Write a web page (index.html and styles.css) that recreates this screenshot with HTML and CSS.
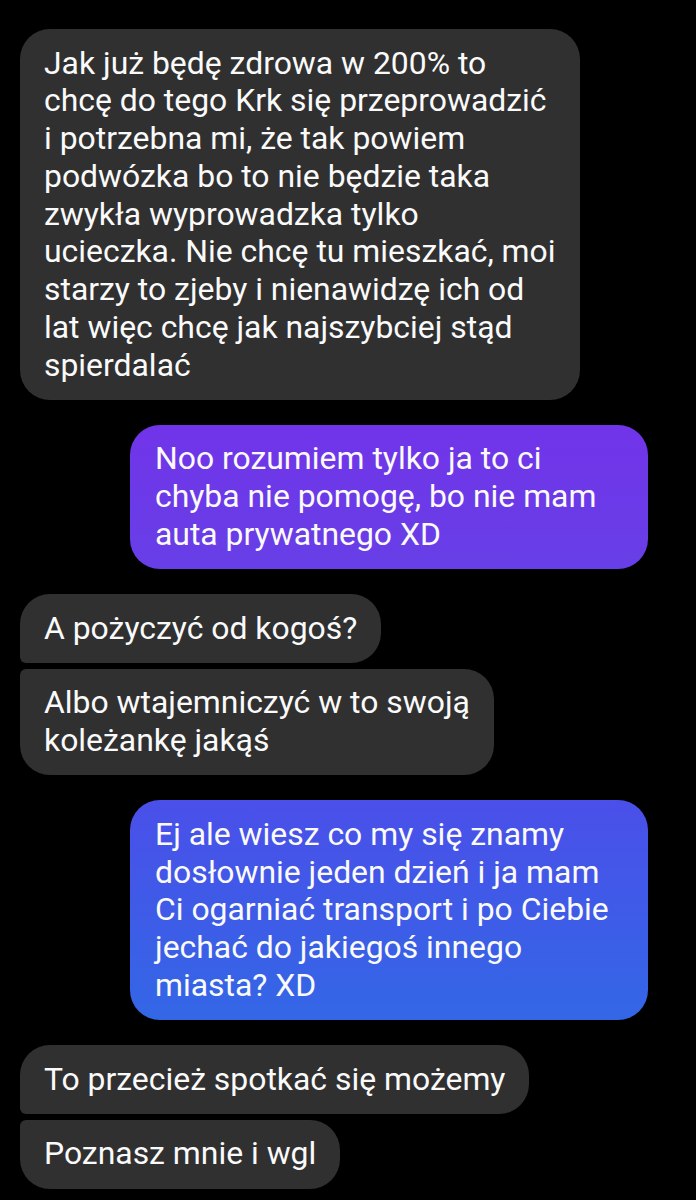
FILE: index.html
```html
<!DOCTYPE html>
<html lang="pl">
<head>
  <meta charset="UTF-8" />
  <meta name="viewport" content="width=device-width, initial-scale=1.0"/>
  <title>Czat</title>
  <link rel="stylesheet" href="styles.css">
</head>
<body>

  <div class="chat">

    <div class="group">
      <div class="msg in">Jak już będę zdrowa w 200% to<br>chcę do tego Krk się przeprowadzić<br>i potrzebna mi, że tak powiem<br>podwózka bo to nie będzie taka<br>zwykła wyprowadzka tylko<br>ucieczka. Nie chcę tu mieszkać, moi<br>starzy to zjeby i nienawidzę ich od<br>lat więc chcę jak najszybciej stąd<br>spierdalać</div>
    </div>

    <div class="group">
      <div class="msg out purple">Noo rozumiem tylko ja to ci<br>chyba nie pomogę, bo nie mam<br>auta prywatnego XD</div>
    </div>

    <div class="group">
      <div class="msg in">A pożyczyć od kogoś?</div>
      <div class="msg in">Albo wtajemniczyć w to swoją<br>koleżankę jakąś</div>
    </div>

    <div class="group">
      <div class="msg out blue">Ej ale wiesz co my się znamy<br>dosłownie jeden dzień i ja mam<br>Ci ogarniać transport i po Ciebie<br>jechać do jakiegoś innego<br>miasta? XD</div>
    </div>

    <div class="group">
      <div class="msg in">To przecież spotkać się możemy</div>
      <div class="msg in">Poznasz mnie i wgl</div>
    </div>

  </div>

</body>
</html>
```

FILE: styles.css
```css
:root {
  --bg-color: #000;
  --text-color: #fafafa;
  --bubble-in: #303030;
  --radius: 30px;
  --radius-small: 6px;
}

body {
  margin: 0;
  background-color: var(--bg-color);
  color: var(--text-color);
  font-family: Roboto, 'Noto Sans', sans-serif;
  font-size: 31.9px;
  line-height: 37.75px;
}

.chat {
  display: flex;
  flex-direction: column;
  gap: 25px;
  padding: 29px 48px 0 20px;
}

.group {
  display: flex;
  flex-direction: column;
  gap: 6px;
}

.msg {
  padding: 15.5px 24px 15.5px 24px;
  border-radius: var(--radius);
  white-space: nowrap;
}

.in {
  align-self: flex-start;
  background-color: var(--bubble-in);
}

.in:not(:last-child) {
  border-bottom-left-radius: var(--radius-small);
}

.in:not(:first-child) {
  border-top-left-radius: var(--radius-small);
}

.out {
  align-self: flex-end;
  box-sizing: border-box;
  width: 518px;
  padding-left: 25px;
}

.purple {
  background: linear-gradient(to bottom, #7134e9, #673fe7);
}

.blue {
  background: linear-gradient(to bottom, #4a4fe9, #3367e6);
}
```
